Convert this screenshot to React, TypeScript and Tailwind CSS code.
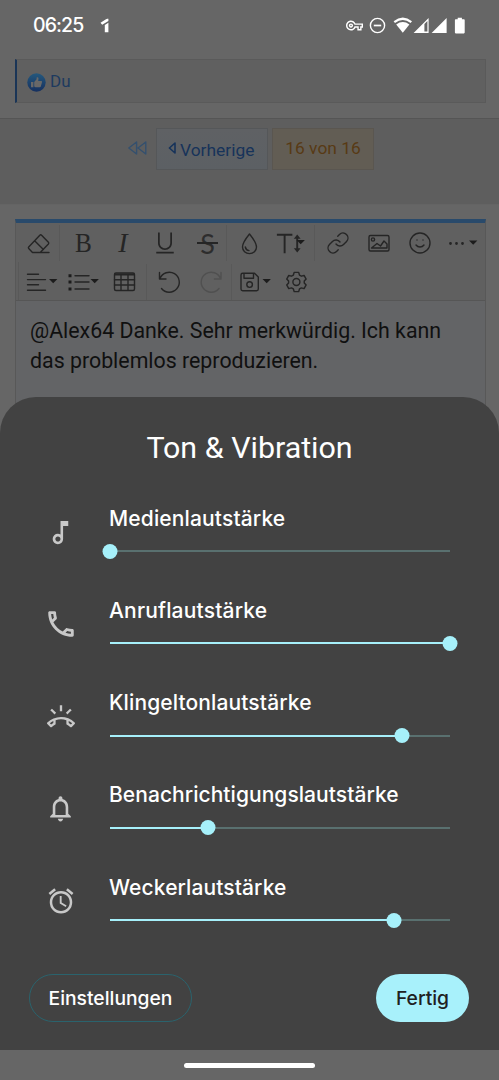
import { useState, type ReactNode } from "react";
import { Link, Smile } from "lucide-react";
import { LiaTextHeightSolid, LiaUnderlineSolid } from "react-icons/lia";
import {
  MdOutlineAlarm,
  MdOutlineCall,
  MdOutlineMusicNote,
  MdOutlineNotifications,
  MdOutlineRingVolume,
  MdOutlineVpnKey,
} from "react-icons/md";

interface Volume {
  id: string;
  label: string;
  value: number;
  icon: ReactNode;
  labelClass: string;
}

const initialVolumes: Volume[] = [
  { id: "media", label: "Medienlautstärke", value: 0, icon: <MdOutlineMusicNote size={31} />, labelClass: "tracking-[0.14px]" },
  { id: "call", label: "Anruflautstärke", value: 100, icon: <MdOutlineCall size={34} />, labelClass: "tracking-[0.18px]" },
  { id: "ring", label: "Klingeltonlautstärke", value: 85.8, icon: <MdOutlineRingVolume size={28} />, labelClass: "tracking-[0.12px]" },
  { id: "notification", label: "Benachrichtigungslautstärke", value: 28.7, icon: <MdOutlineNotifications size={31} />, labelClass: "tracking-[0.05px]" },
  { id: "alarm", label: "Weckerlautstärke", value: 83.5, icon: <MdOutlineAlarm size={30} />, labelClass: "tracking-[0.1px]" },
];

function StatusBar() {
  return (
    <div className="flex h-[59px] items-start pt-[10px] text-white">
      <span className="ml-[33px] w-[67px] font-['Inter',sans-serif] text-[19.5px] font-medium leading-[31px] tracking-[-0.9px]">06:25</span>
      <svg width="10" height="16" viewBox="0 0 10 16" className="mt-2" fill="currentColor">
        <path d="M0.5 4.8 6 1.2Q6.6.8 7.2.8H8.4V3L2.2 6.8ZM4.8 7 8.4 4.8V14.3H4.8Z" />
      </svg>
      <div className="ml-auto mr-[33px] flex items-center pt-[7px]">
        <MdOutlineVpnKey size={17} className="mr-[6px] shrink-0" />
        <svg width="17" height="17" viewBox="0 0 17 17" className="shrink-0" fill="none" stroke="currentColor" strokeWidth="1.4">
          <circle cx="8.5" cy="8.5" r="7.1" />
          <path d="M4.8 8.5h7.4" strokeWidth="1.7" />
        </svg>
        <svg width="80" height="17" viewBox="0 0 80 17" className="shrink-0" fill="currentColor">
          <path d="M7.6 4.2Q16.8-3 26 4.2L24.6 6Q16.8 .2 9 6Z" />
          <path d="M10.2 7.4Q16.8 2.7 23.4 7.4L16.8 15.8Z" />
          <path fillRule="evenodd" d="M27.6 16 42.6 1V16ZM38.4 7V14.6H41.4V4Z" />
          <path d="M45.6 16 60.6 1V16Z" />
          <path d="M69.7 2.2h2V.8h4.2v1.4h2q.8 0 .8.8v12.6q0 .8-.8.8h-8.2q-.8 0-.8-.8V3q0-.8.8-.8Z" />
        </svg>
      </div>
    </div>
  );
}

function LikeBox() {
  return (
    <div className="ml-[15px] mr-[13px] flex h-[44px] items-center border border-l-2 border-[#5a5a5a] border-l-[#1a3557] bg-[#606060] pl-[10px]">
      <svg width="19" height="19" viewBox="0 0 19 19" className="mt-[2px]">
        <defs>
          <linearGradient id="like" x1="0" y1="0" x2="0" y2="1">
            <stop offset="0" stopColor="#24587d" />
            <stop offset="1" stopColor="#16305f" />
          </linearGradient>
        </defs>
        <circle cx="9.5" cy="9.5" r="9.2" fill="url(#like)" />
        <path d="M4 9h2.4v5.2H4ZM7.2 9 9.6 6.2V4.4q1.8-.7 1.9 1.2L11.2 8h3.2q1 .3.6 1.2l-1.2 4.2q-.3.8-1.2.8H8.4L7.2 13.6Z" fill="#686868" />
      </svg>
      <span className="ml-[4px] text-[17px] leading-5 text-[#1d3a5f]">Du</span>
    </div>
  );
}

function Pagination() {
  return (
    <div className="mt-[15px] flex h-[87px] items-start border-y border-[#555555] border-b-[#646464] bg-[#5e5e5e] pl-[128px] pt-[9px]">
      <svg width="19" height="14" viewBox="0 0 19 14" className="mr-[9px] mt-[13px]" fill="none" stroke="#34506e" strokeWidth="1.4" strokeLinejoin="round">
        <path d="M8.6 1V13L.8 7ZM17.8 1V13L10 7Z" />
      </svg>
      <button className="flex h-[42px] w-[112px] items-center border border-[#555759] bg-linear-to-b from-[#5f6164] to-[#5c6064] pl-[11px] pt-[2px] text-[17.4px] text-[#17335a]">
        <svg width="9" height="12" viewBox="0 0 9 12" className="mb-[5px] mr-[3px]" fill="none" stroke="currentColor" strokeWidth="1.6" strokeLinejoin="round">
          <path d="M7 1V11L1.4 6Z" />
        </svg>
        Vorherige
      </button>
      <span className="ml-1 flex h-[42px] w-[102px] items-center justify-center border border-[#5a5650] bg-[#625d54] pb-px text-[17.4px] text-[#583a14]">
        16 von 16
      </span>
    </div>
  );
}

function Tool({ width, divider, children }: { width: number; divider?: boolean; children: ReactNode }) {
  return (
    <button
      style={{ width }}
      className={`flex h-[36px] shrink-0 items-center justify-center overflow-visible ${divider ? "border-r border-[#595959]" : ""}`}
    >
      {children}
    </button>
  );
}

function Glyph({ w = 42, children }: { w?: number; children: ReactNode }) {
  return (
    <svg width={w} height="39" viewBox={`0 0 ${w} 39`} className="shrink-0" fill="none" stroke="currentColor" strokeWidth="1.4" strokeLinecap="round" strokeLinejoin="round">
      {children}
    </svg>
  );
}

function Caret({ x, y = 17 }: { x: number; y?: number }) {
  return <path d={`M${x} ${y}h8.4l-4.2 4.2Z`} fill="#1c1c1c" stroke="none" />;
}

const serifLetter = "font-['Liberation_Serif',serif] text-[28px] leading-none";

function Toolbar() {
  return (
    <div className="h-[78px] border-b border-[#565656] bg-[#606060] text-[#252525]">
      <div className="flex h-[39px] items-center pt-px">
        <Tool width={44} divider>
          <Glyph>
            <path d="M15.5 28.5 11.7 24.6Q11 23.8 11.7 23L22.8 11.2Q23.7 10.3 24.6 11.2L31.4 18.2Q32.2 19.1 31.4 20L23.2 28.5M15.5 28.5H32M17.6 16.8 26.4 25.4" />
          </Glyph>
        </Tool>
        <Tool width={46}><span className={`${serifLetter} scale-x-90`}>B</span></Tool>
        <Tool width={34}><span className={`${serifLetter} italic`}>I</span></Tool>
        <Tool width={49}><LiaUnderlineSolid size={28} /></Tool>
        <Tool width={38} divider>
          <span className="relative flex w-[21px] justify-center font-['Lato',sans-serif] text-[27px] leading-none">
            <span className="opacity-85">S</span>
            <span className="absolute left-0 top-[12.5px] h-[1.5px] w-[21px] bg-[#252525]" />
          </span>
        </Tool>
        <Tool width={44}>
          <Glyph>
            <path d="M21.5 10Q14.5 18.5 14.5 23A7 6.6 0 0 0 28.5 23Q28.5 18.5 21.5 10Z" />
            <path d="M17.3 23Q18 26.3 21 26.6" />
          </Glyph>
        </Tool>
        <Tool width={44} divider>
          <LiaTextHeightSolid size={31} className="-ml-[6px] -mr-[9px] shrink-0" />
          <Glyph w={11}>
            <Caret x={1.5} y={16} />
          </Glyph>
        </Tool>
        <Tool width={46}><Link size={24} strokeWidth={1.4} /></Tool>
        <Tool width={35}>
          <Glyph w={24}>
            <rect x="2" y="11.5" width="20" height="15.5" rx="1.5" />
            <circle cx="6" cy="15.5" r="1.6" />
            <path d="M4.5 24 10 19.5 13.5 22 17 17 20 20V24Z" />
          </Glyph>
        </Tool>
        <Tool width={48}><Smile size={24} strokeWidth={1.4} /></Tool>
        <Tool width={38}>
          <Glyph w={30}>
            <path d="M2.5 19.5h.01M8.5 19.5h.01M14.5 19.5h.01" strokeWidth="2.8" />
            <Caret x={21} y={16.5} />
          </Glyph>
        </Tool>
      </div>
      <div className="ml-[2px] flex h-[38px] items-center border-l border-[#595959] pt-px">
        <Tool width={43}>
          <Glyph>
            <path d="M7.5 12.2H18.5M7.5 17.6H25.5M7.5 22.8H18.5M7.5 28.2H25.5" />
            <Caret x={29} />
          </Glyph>
        </Tool>
        <Tool width={42}>
          <Glyph>
            <path d="M13 13.8H27M13 20H27M13 27H27" />
            <path d="M6.5 12.3h3v3h-3ZM6.5 18.5h3v3h-3ZM6.5 25.5h3v3h-3Z" fill="#1c1c1c" stroke="none" />
            <Caret x={28.5} />
          </Glyph>
        </Tool>
        <Tool width={43} divider>
          <Glyph>
            <rect x="10.5" y="11" width="20" height="17.5" rx="1.5" />
            <path d="M11 12.5h19" strokeWidth="2" />
            <path d="M17 13V28M24 13V28M10.5 17.8h20M10.5 23h20" />
          </Glyph>
        </Tool>
        <Tool width={42}>
          <Glyph>
            <path d="M12.5 10.5V17H19M13 16.5A10 10 0 1 1 14.5 26.5" />
          </Glyph>
        </Tool>
        <Tool width={43} divider>
          <Glyph>
            <path d="M32 10.5V17H25.5M31.5 16.5A10 10 0 1 0 30 26.5" stroke="#505050" />
          </Glyph>
        </Tool>
        <Tool width={42}>
          <Glyph>
            <path d="M9 13Q9 11.3 10.7 11.3H22.5L26.3 15V27Q26.3 28.7 24.6 28.7H10.7Q9 28.7 9 27ZM12 11.5V16.3H21.5V11.5" />
            <circle cx="17.6" cy="22.6" r="2.8" />
            <Caret x={30.5} />
          </Glyph>
        </Tool>
        <Tool width={44}>
          <Glyph w={44}>
            <path d="M20.3 10.2H25.3L26.2 13.2 28.3 14.4 31.3 13.6 33.6 17.6 31.5 19.9V22L33.6 24.2 31.3 28.2 28.3 27.4 26.2 28.6 25.3 31.6H20.3L19.4 28.6 17.3 27.4 14.3 28.2 12 24.2 14.1 22V19.9L12 17.6 14.3 13.6 17.3 14.4 19.4 13.2Z" transform="translate(1.9 1.2) scale(.9)" strokeWidth="1.6" />
            <circle cx="22.4" cy="20" r="3.5" />
          </Glyph>
        </Tool>
      </div>
    </div>
  );
}

function Editor() {
  return (
    <div className="ml-[15px] mr-[13px] mt-[14px] h-[300px] border border-t-[4px] border-[#585858] border-t-[#294a6b] bg-[#636466]">
      <Toolbar />
      <p className="whitespace-nowrap pl-[14px] pt-[14.5px] text-[21.35px] leading-[30px] text-[#101010]">
        @Alex64 Danke. Sehr merkwürdig. Ich kann
        <br />
        das problemlos reproduzieren.
      </p>
    </div>
  );
}

function Slider({ value, onChange, label }: { value: number; onChange: (v: number) => void; label: string }) {
  return (
    <div className="relative h-[15px] w-[340px]">
      <div className="flex h-full items-center">
        <div className="h-[2px] bg-[#a6f0fa]" style={{ width: `${value}%` }} />
        <div className="h-[2px] flex-1 bg-[#59706f]" />
      </div>
      <div className="absolute top-0 size-[15px] -translate-x-1/2 rounded-full bg-[#a6f0fa]" style={{ left: `${value}%` }} />
      <input
        type="range"
        min={0}
        max={100}
        step={0.1}
        value={value}
        aria-label={label}
        onChange={(e) => onChange(Number(e.target.value))}
        className="absolute inset-0 w-full cursor-pointer opacity-0"
      />
    </div>
  );
}

function VolumeSheet() {
  const [volumes, setVolumes] = useState(initialVolumes);

  function setValue(id: string, value: number) {
    setVolumes((prev) => prev.map((v) => (v.id === id ? { ...v, value } : v)));
  }

  return (
    <div className="absolute inset-x-0 bottom-[30px] h-[653px] rounded-t-[36px] bg-[#424242] text-white">
      <h1 className="pt-[31px] text-center text-[30.4px] leading-10">Ton &amp; Vibration</h1>

      <div className="mt-[35.5px]">
        {volumes.map((v) => (
          <div key={v.id} className="flex h-[92.3px]">
            <div className="mt-[10.5px] flex h-[36px] w-[110px] shrink-0 items-center justify-center pl-[11px] text-[#c8c8c8]">
              {v.icon}
            </div>
            <div>
              <div className={`-ml-px h-[40px] whitespace-nowrap font-['Inter',sans-serif] text-[21px] font-medium leading-[30px] ${v.labelClass}`}>{v.label}</div>
              <Slider value={v.value} label={v.label} onChange={(value) => setValue(v.id, value)} />
            </div>
          </div>
        ))}
      </div>

      <div className="mt-[9.5px] flex justify-between pl-[29px] pr-[30px] font-['Inter',sans-serif] text-[19.3px] font-medium">
        <button className="h-[48px] w-[163px] rounded-full border border-[#2a636d]">Einstellungen</button>
        <button className="h-[48px] w-[93px] rounded-full bg-[#a8f1fb] text-[#202020]">Fertig</button>
      </div>
    </div>
  );
}

export default function App() {
  return (
    <div className="relative h-[1080px] w-[499px] overflow-hidden bg-[#666666] font-['Roboto',sans-serif]">
      <StatusBar />
      <LikeBox />
      <Pagination />
      <Editor />
      <VolumeSheet />
      <div className="absolute inset-x-0 bottom-0 flex h-[30px] justify-center bg-[#666666] pt-[13px]">
        <div className="h-[5px] w-[131px] rounded-full bg-white" />
      </div>
    </div>
  );
}
